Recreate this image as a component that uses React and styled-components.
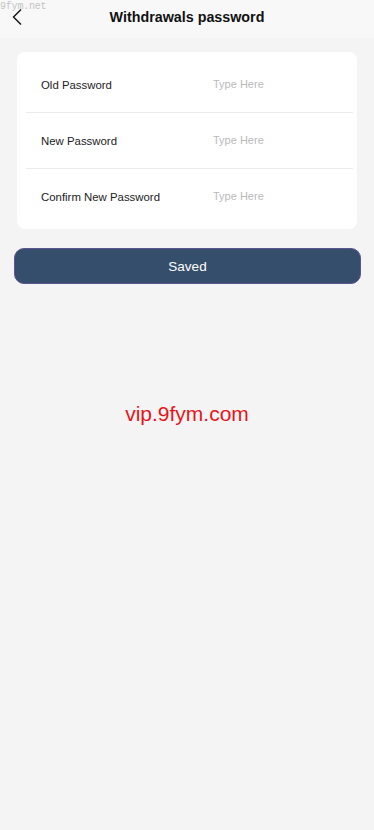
import React from "react";
import styled, { createGlobalStyle } from "styled-components";

const Global = createGlobalStyle`
  html, body { margin: 0; padding: 0; background: #f4f4f4; }
  body { font-family: "Liberation Sans", Arial, sans-serif; }
  * { box-sizing: border-box; }
`;

const Page = styled.div`
  position: relative;
  width: 374px;
  min-height: 830px;
  background: #f4f4f4;
  display: flex;
  flex-direction: column;
`;

const Watermark = styled.span`
  position: absolute;
  left: 0;
  top: 1px;
  font-family: "Liberation Mono", monospace;
  font-size: 10px;
  color: #c4c4c4;
  letter-spacing: -0.2px;
`;

const Header = styled.header`
  height: 38px;
  background: #f8f8f8;
  display: grid;
  grid-template-columns: 44px 1fr 44px;
  align-items: center;
`;

const Back = styled.button`
  border: 0;
  background: none;
  padding: 0 0 0 11px;
  height: 38px;
  display: flex;
  align-items: center;
  justify-content: flex-start;
  margin-top: -5px;
`;

const Title = styled.h1`
  margin: 0;
  text-align: center;
  font-size: 14.3px;
  font-weight: 700;
  color: #111;
  margin-top: -4px;
`;

const Card = styled.div`
  margin: 14px 17px 0 17px;
  background: #fff;
  border-radius: 8px;
  padding: 5px 4px 4px 9px;
`;

const Row = styled.div`
  height: 56px;
  display: grid;
  grid-template-columns: 187px 1fr;
  align-items: center;
  border-bottom: ${(p) => (p.last ? "none" : "1px solid #ebebeb")};
`;

const Label = styled.span`
  padding-left: 15px;
  font-size: 11.4px;
  color: #222;
`;

const Input = styled.input`
  border: 0;
  outline: none;
  background: transparent;
  font-family: "Liberation Sans", Arial, sans-serif;
  font-size: 11px;
  color: #333;
  padding: 0;
  margin-top: -2px;
  &::placeholder { color: #b9b9bd; }
`;

const SaveButton = styled.button`
  margin: 19px 13px 0 14px;
  height: 36px;
  border-radius: 10px;
  background: #354e6b;
  border: 1.5px solid #5d5590;
  color: #fff;
  font-family: "Liberation Sans", Arial, sans-serif;
  font-size: 13.5px;
`;

const Promo = styled.div`
  margin-top: 116px;
  text-align: center;
  font-size: 21px;
  line-height: 28px;
  color: #e8141c;
`;

const fields = ["Old Password", "New Password", "Confirm New Password"];

export default function App() {
  return (
    <>
      <Global />
      <Page>
        <Watermark>9fym.net</Watermark>
        <Header>
          <Back aria-label="back">
            <svg width="12" height="18" viewBox="0 0 12 18" fill="none">
              <path d="M10 1.5 L2.5 9 L10 16.5" stroke="#111" strokeWidth="1.4" />
            </svg>
          </Back>
          <Title>Withdrawals password</Title>
          <span />
        </Header>
        <Card>
          {fields.map((f, i) => (
            <Row key={f} last={i === fields.length - 1}>
              <Label>{f}</Label>
              <Input type="password" placeholder="Type Here" />
            </Row>
          ))}
        </Card>
        <SaveButton>Saved</SaveButton>
        <Promo>vip.9fym.com</Promo>
      </Page>
    </>
  );
}
